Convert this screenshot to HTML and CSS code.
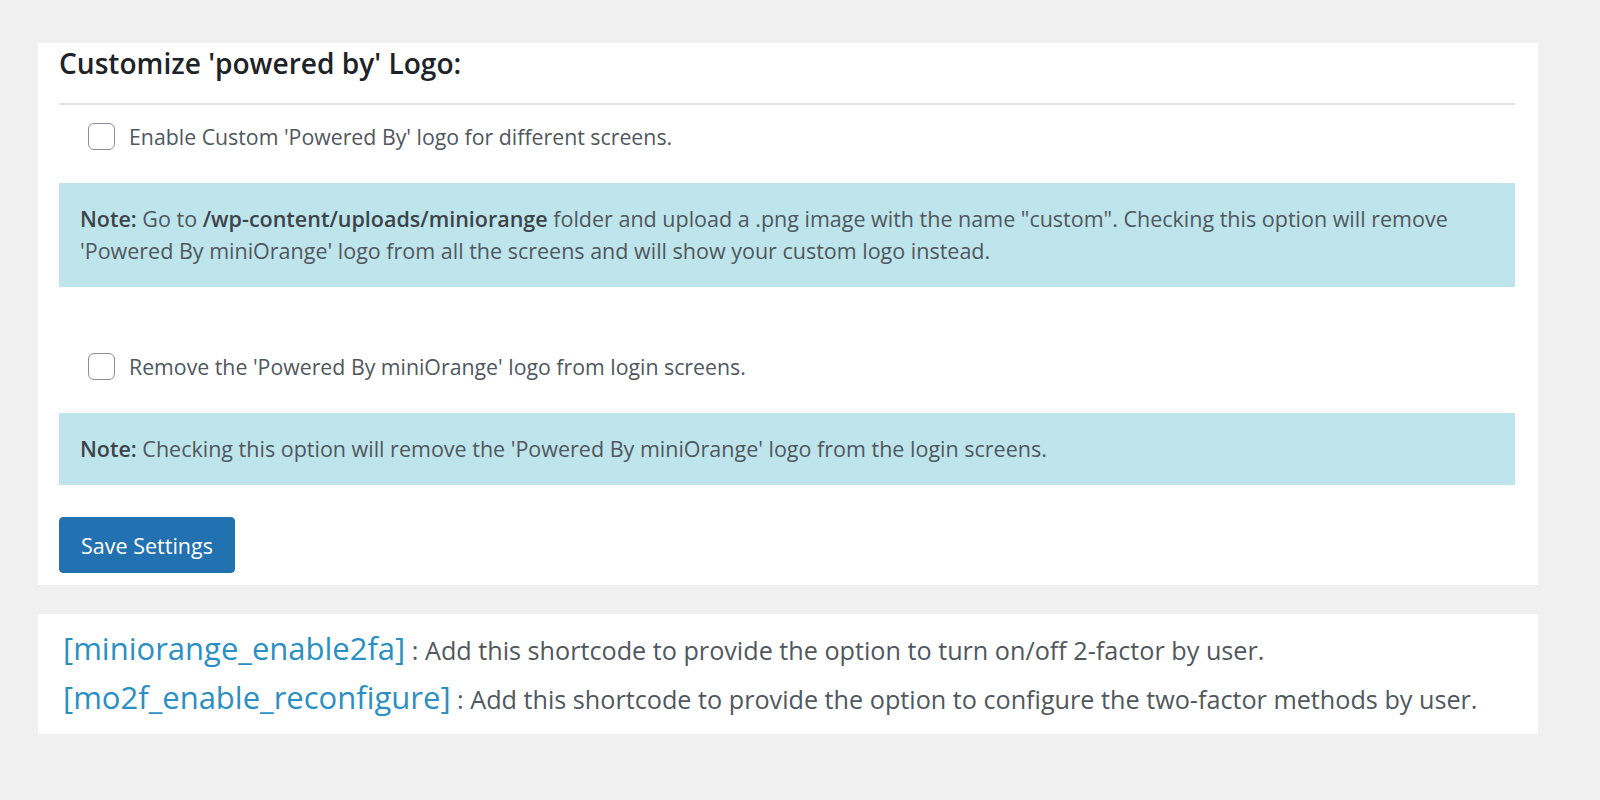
FILE: index.html
```html
<!DOCTYPE html>
<html>
<head>
<meta charset="utf-8">
<link rel="stylesheet" href="styles.css">
</head>
<body>
<div class="wrap">
  <div class="panel main">
    <h3 class="title">Customize 'powered by' Logo:</h3>
    <hr class="rule">
    <label class="check-row first">
      <span class="box"></span>
      <span class="check-text">Enable Custom 'Powered By' logo for different screens.</span>
    </label>
    <div class="note two-line">
      <b>Note:</b> Go to <b>/wp-content/uploads/miniorange</b> folder and upload a .png image with the name "custom". Checking this option will remove<br>'Powered By miniOrange' logo from all the screens and will show your custom logo instead.
    </div>
    <label class="check-row second">
      <span class="box"></span>
      <span class="check-text">Remove the 'Powered By miniOrange' logo from login screens.</span>
    </label>
    <div class="note one-line">
      <span><b>Note:</b> Checking this option will remove the 'Powered By miniOrange' logo from the login screens.</span>
    </div>
    <button class="save">Save Settings</button>
  </div>
  <div class="panel codes">
    <p class="code-line"><span class="code">[miniorange_enable2fa]</span> : Add this shortcode to provide the option to turn on/off 2-factor by user.</p>
    <p class="code-line"><span class="code">[mo2f_enable_reconfigure]</span> : Add this shortcode to provide the option to configure the two-factor methods by user.</p>
  </div>
</div>
</body>
</html>
```

FILE: styles.css
```css
* { box-sizing: border-box; }
html, body {
  margin: 0;
  padding: 0;
  background: #f0f0f1;
  font-family: "Open Sans", "Noto Sans", sans-serif;
  color: #50575e;
}
.wrap {
  padding: 43px 62px 0 38px;
  display: flex;
  flex-direction: column;
  gap: 29px;
}
.panel {
  background: #ffffff;
  padding: 0 23px 0 21px;
}
.main {
  padding-bottom: 12px;
}
.title {
  margin: 0;
  height: 40px;
  line-height: 40px;
  font-size: 28.1px;
  font-weight: 600;
  color: #1d2327;
}
.rule {
  margin: 20px 0 0 0;
  border: 0;
  height: 2px;
  background: #e4e4e4;
}
.check-row {
  display: flex;
  align-items: center;
  gap: 14px;
  padding-left: 29px;
  height: 28px;
  font-size: 21.3px;
}
.check-row.first { margin-top: 17px; }
.check-row.second { margin-top: 65px; }
.box {
  width: 27px;
  height: 27px;
  border: 1.5px solid #8c8f94;
  border-radius: 6px;
  background: #fff;
  flex: none;
}
.check-text { color: #50575e; }
.note {
  background: #bee5eb;
  padding: 0 21px;
  font-size: 21.5px;
  line-height: 32px;
  color: #50575e;
}
.note b { color: #3c434a; font-weight: 600; }
.two-line {
  margin-top: 33px;
  height: 104px;
  padding-top: 20px;
}
.one-line {
  margin-top: 33px;
  height: 72px;
  display: flex;
  align-items: center;
}
.save {
  margin-top: 32px;
  display: block;
  width: 176px;
  height: 56px;
  border: 1px solid #2271b1;
  border-radius: 4px;
  background: #2271b1;
  color: #ffffff;
  font-family: "Open Sans", "Noto Sans", sans-serif;
  font-size: 21.5px;
  padding: 0;
}
.codes {
  padding-top: 10px;
  padding-bottom: 12px;
  padding-left: 25px;
}
.code-line {
  margin: 0;
  height: 49px;
  line-height: 49px;
  font-size: 25.2px;
  color: #50575e;
  white-space: nowrap;
}
.code {
  color: #2a8fc4;
  font-size: 31px;
}
```
